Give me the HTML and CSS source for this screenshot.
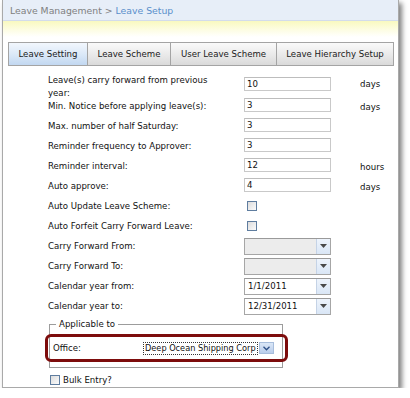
FILE: index.html
```html
<!DOCTYPE html>
<html lang="en">
<head>
    <meta charset="UTF-8">
    <meta name="viewport" content="width=device-width, initial-scale=1.0">
    <title>Leave Setup</title>
    <link rel="stylesheet" href="styles.css">
</head>
<body>
    <div class="panel">
        <div class="crumb">
            <span class="crumb-parent">Leave Management &gt; </span><span class="crumb-current">Leave Setup</span>
        </div>
        <div class="notice"></div>

        <div class="tabs">
            <div class="tab tab-active tab-setting">Leave Setting</div>
            <div class="tab tab-scheme">Leave Scheme</div>
            <div class="tab tab-user">User Leave Scheme</div>
            <div class="tab tab-hierarchy">Leave Hierarchy Setup</div>
        </div>

        <div class="setup-form">
            <div class="row row-tall">
                <div class="lbl">Leave(s) carry forward from previous year:</div>
                <div class="fld"><input class="txt" type="text" value="10"></div>
                <div class="unit">days</div>
            </div>
            <div class="row">
                <div class="lbl">Min. Notice before applying leave(s):</div>
                <div class="fld"><input class="txt" type="text" value="3"></div>
                <div class="unit">days</div>
            </div>
            <div class="row">
                <div class="lbl">Max. number of half Saturday:</div>
                <div class="fld"><input class="txt" type="text" value="3"></div>
            </div>
            <div class="row">
                <div class="lbl">Reminder frequency to Approver:</div>
                <div class="fld"><input class="txt" type="text" value="3"></div>
            </div>
            <div class="row">
                <div class="lbl">Reminder interval:</div>
                <div class="fld"><input class="txt" type="text" value="12"></div>
                <div class="unit">hours</div>
            </div>
            <div class="row">
                <div class="lbl">Auto approve:</div>
                <div class="fld"><input class="txt" type="text" value="4"></div>
                <div class="unit">days</div>
            </div>
            <div class="row">
                <div class="lbl">Auto Update Leave Scheme:</div>
                <div class="fld"><input class="chk" type="checkbox"></div>
            </div>
            <div class="row">
                <div class="lbl">Auto Forfeit Carry Forward Leave:</div>
                <div class="fld"><input class="chk" type="checkbox"></div>
            </div>
            <div class="row">
                <div class="lbl">Carry Forward From:</div>
                <div class="fld">
                    <div class="combo combo-disabled">
                        <span class="combo-text"></span>
                        <span class="combo-btn"><svg width="7" height="4" viewBox="0 0 7 4"><path d="M0 0h7L3.5 4z" fill="#4a4a4a"/></svg></span>
                    </div>
                </div>
            </div>
            <div class="row">
                <div class="lbl">Carry Forward To:</div>
                <div class="fld">
                    <div class="combo combo-disabled">
                        <span class="combo-text"></span>
                        <span class="combo-btn"><svg width="7" height="4" viewBox="0 0 7 4"><path d="M0 0h7L3.5 4z" fill="#4a4a4a"/></svg></span>
                    </div>
                </div>
            </div>
            <div class="row">
                <div class="lbl">Calendar year from:</div>
                <div class="fld">
                    <div class="combo">
                        <span class="combo-text">1/1/2011</span>
                        <span class="combo-btn"><svg width="7" height="4" viewBox="0 0 7 4"><path d="M0 0h7L3.5 4z" fill="#4a4a4a"/></svg></span>
                    </div>
                </div>
            </div>
            <div class="row">
                <div class="lbl">Calendar year to:</div>
                <div class="fld">
                    <div class="combo">
                        <span class="combo-text">12/31/2011</span>
                        <span class="combo-btn"><svg width="7" height="4" viewBox="0 0 7 4"><path d="M0 0h7L3.5 4z" fill="#4a4a4a"/></svg></span>
                    </div>
                </div>
            </div>
        </div>

        <fieldset class="applicable">
            <legend>Applicable to</legend>
            <div class="office-row">
                <span class="office-lbl">Office:</span>
                <div class="office-select">
                    <span class="office-text">Deep Ocean Shipping Corp</span>
                    <span class="office-btn"><svg width="7" height="5" viewBox="0 0 7 5"><path d="M0.5 0.8L3.5 3.8L6.5 0.8" fill="none" stroke="#2c4f86" stroke-width="1.3"/></svg></span>
                </div>
            </div>
        </fieldset>

        <label class="bulk"><input class="chk" type="checkbox">Bulk Entry?</label>
    </div>
</body>
</html>
```

FILE: styles.css
```css
body {
    margin: 0;
    padding: 0;
    background-color: #fff;
    font-family: "DejaVu Sans", Verdana, sans-serif;
    font-size: 8.6px;
    color: #111;
}
.panel {
    margin-left: 2px;
    width: 397px;
    height: 388px;
    box-sizing: border-box;
    border: 1px solid #a9a9a9;
    border-top: none;
    background-color: #fff;
    box-shadow: 3px 3px 5px rgba(0, 0, 0, 0.5);
}
.crumb {
    height: 20px;
    line-height: 21px;
    padding-left: 7px;
    font-size: 9.3px;
    background-color: #e7eef8;
    border-bottom: 1px solid #d3dceb;
}
.crumb-parent {
    color: #808080;
}
.crumb-current {
    color: #5a8fcb;
}
.notice {
    height: 16px;
    background: linear-gradient(#f9f9bf, #fdfde6 60%, #fff);
}
.tabs {
    display: flex;
    margin: 5px 0 0 5px;
    height: 24px;
}
.tab {
    box-sizing: border-box;
    height: 24px;
    line-height: 23px;
    text-align: center;
    color: #1a1a1a;
    border: 1px solid #a4a4a4;
    border-left: none;
    background: linear-gradient(#fafafa, #e9e9e9 55%, #dadada);
}
.tab-active {
    border-left: 1px solid #a4a4a4;
    background: linear-gradient(#f2f7fd, #dce9f8 50%, #c2d8f1);
}
.tab-setting { width: 80px; }
.tab-scheme { width: 83px; }
.tab-user { width: 106px; }
.tab-hierarchy { width: 117px; }

.setup-form {
    margin: 8px 0 0 45px;
}
.row {
    display: flex;
    align-items: center;
    height: 20px;
}
.row-tall {
    height: 22px;
    align-items: flex-start;
}
.lbl {
    width: 180px;
    padding-right: 16px;
    line-height: 13px;
    padding-top: 1px;
}
.row-tall .lbl {
    padding-top: 0;
}
.fld {
    width: 116px;
    display: flex;
    align-items: center;
}
.row-tall .fld {
    margin-top: 3px;
}
.unit {
    padding-top: 1px;
}
.row-tall .unit {
    margin-top: 4px;
}
.txt {
    box-sizing: border-box;
    width: 87px;
    height: 14px;
    margin: 0 0 2px 0;
    padding: 0 2px;
    border: 1px solid #c9c9c9;
    border-top-color: #bdbdbd;
    font-family: inherit;
    font-size: 8.6px;
    color: #111;
    background-color: #fff;
    outline: none;
}
.chk {
    -webkit-appearance: none;
    appearance: none;
    box-sizing: border-box;
    width: 10px;
    height: 10px;
    margin: 0 0 0 3px;
    border: 1px solid #5f7d9f;
    background: linear-gradient(135deg, #dcdcdc, #fbfbfb);
}
.combo {
    box-sizing: border-box;
    display: flex;
    width: 87px;
    height: 17px;
    border: 1px solid #a6a6a6;
    border-top-color: #9a9a9a;
    background-color: #fff;
}
.combo-disabled {
    background-color: #ececec;
}
.combo-text {
    flex: 1;
    padding-left: 3px;
    line-height: 15px;
}
.combo-btn {
    width: 13px;
    display: flex;
    align-items: center;
    justify-content: center;
    border-left: 1px solid #c5d3e6;
    background: linear-gradient(#eef4fc, #d9e6f6);
}

.applicable {
    margin: 2px 0 0 46px;
    padding: 0 6px 5px 6px;
    width: 234px;
    box-sizing: border-box;
    border: 1px solid #9c9c9c;
}
.applicable legend {
    padding: 0 3px;
    line-height: 12px;
}
.office-row {
    display: flex;
    align-items: center;
    height: 22px;
    margin: 4px -12px 0 -11px;
    padding-left: 5px;
    border: 3px solid #7d0c0c;
    border-radius: 6px;
}
.office-lbl {
    width: 90px;
}
.office-select {
    display: flex;
    align-items: center;
    width: 131px;
    height: 13px;
    background-color: #fff;
}
.office-text {
    flex: 1;
    height: 11px;
    line-height: 11px;
    padding-left: 1px;
    font-size: 8.2px;
    border: 1px dotted #333;
    white-space: nowrap;
    overflow: hidden;
}
.office-btn {
    width: 13px;
    height: 10px;
    margin-left: 1px;
    display: flex;
    align-items: center;
    justify-content: center;
    border: 1px solid #a7bddc;
    background: linear-gradient(#dbe7f7, #b9cdeb);
}
.bulk {
    display: flex;
    align-items: center;
    height: 16px;
    margin: 4px 0 0 44px;
}
.bulk .chk {
    margin-right: 3px;
}
```
